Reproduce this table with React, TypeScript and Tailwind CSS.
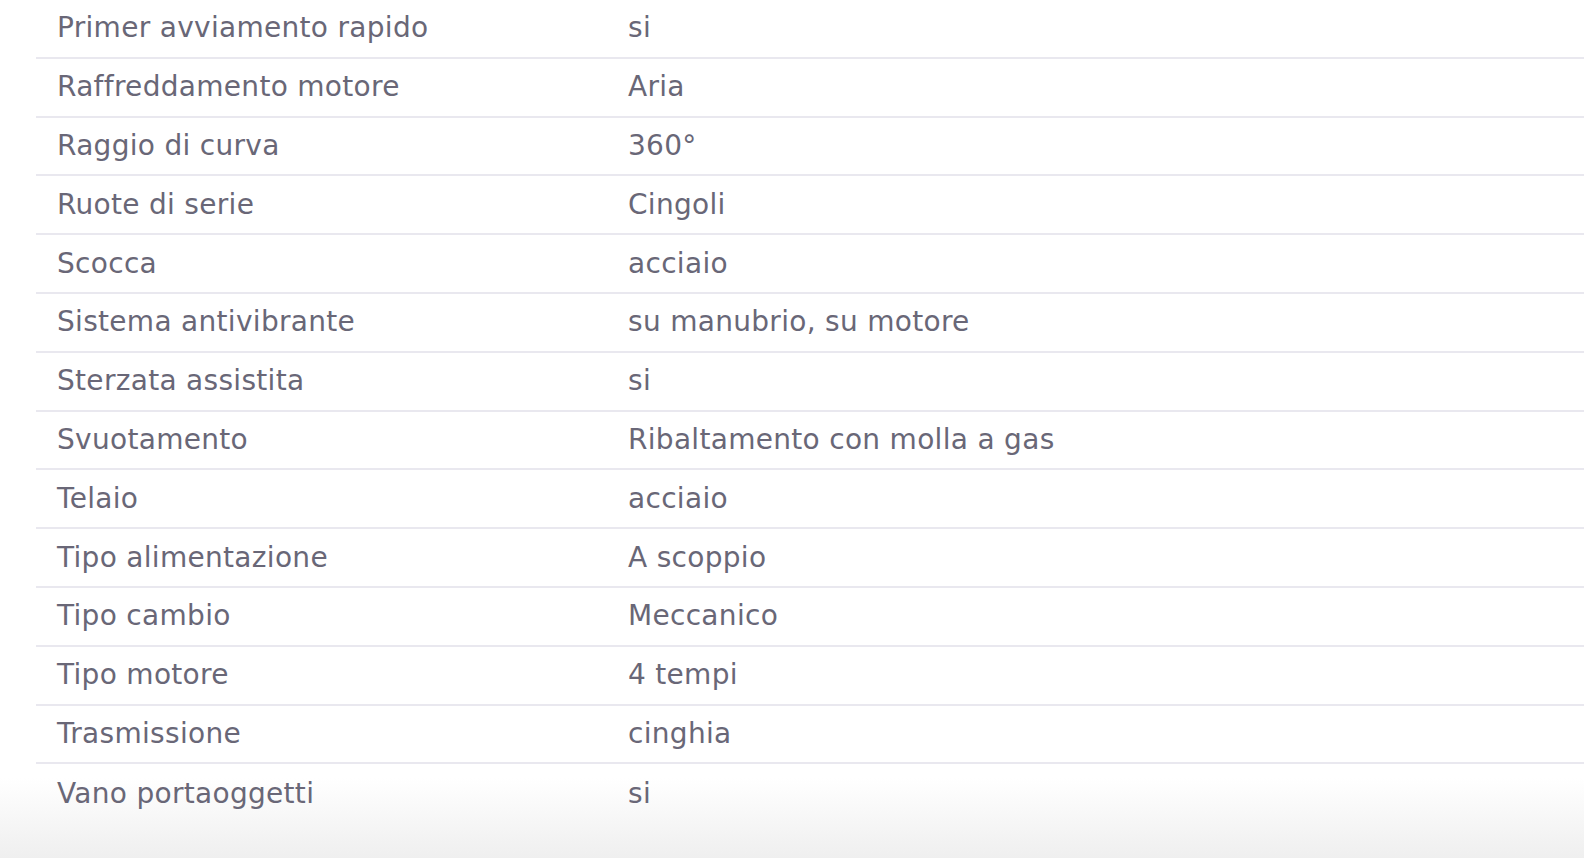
import React from "react";

const rows: [string, string][] = [
  ["Primer avviamento rapido", "si"],
  ["Raffreddamento motore", "Aria"],
  ["Raggio di curva", "360°"],
  ["Ruote di serie", "Cingoli"],
  ["Scocca", "acciaio"],
  ["Sistema antivibrante", "su manubrio, su motore"],
  ["Sterzata assistita", "si"],
  ["Svuotamento", "Ribaltamento con molla a gas"],
  ["Telaio", "acciaio"],
  ["Tipo alimentazione", "A scoppio"],
  ["Tipo cambio", "Meccanico"],
  ["Tipo motore", "4 tempi"],
  ["Trasmissione", "cinghia"],
  ["Vano portaoggetti", "si"],
];

export default function App() {
  return (
    <div
      className="relative w-[1584px] h-[858px] overflow-hidden bg-white"
      style={{ fontFamily: '"DejaVu Sans", sans-serif' }}
    >
      <div className="absolute left-0 right-0 bottom-0 h-[80px] bg-gradient-to-b from-white/0 to-[#efefef]" />
      <div className="relative pl-[36px]">
        {rows.map(([k, v], i) => (
          <div
            key={i}
            className={
              i < rows.length - 1
                ? "flex items-center h-[58.8px] border-b-2 border-[#e9e8ef] text-[28px] leading-none tracking-[0.3px] text-[#696777]"
                : "flex items-center h-[58.8px] text-[28px] leading-none tracking-[0.3px] text-[#696777]"
            }
          >
            <div className="w-[592px] pl-[21px] shrink-0">{k}</div>
            <div>{v}</div>
          </div>
        ))}
      </div>
    </div>
  );
}
